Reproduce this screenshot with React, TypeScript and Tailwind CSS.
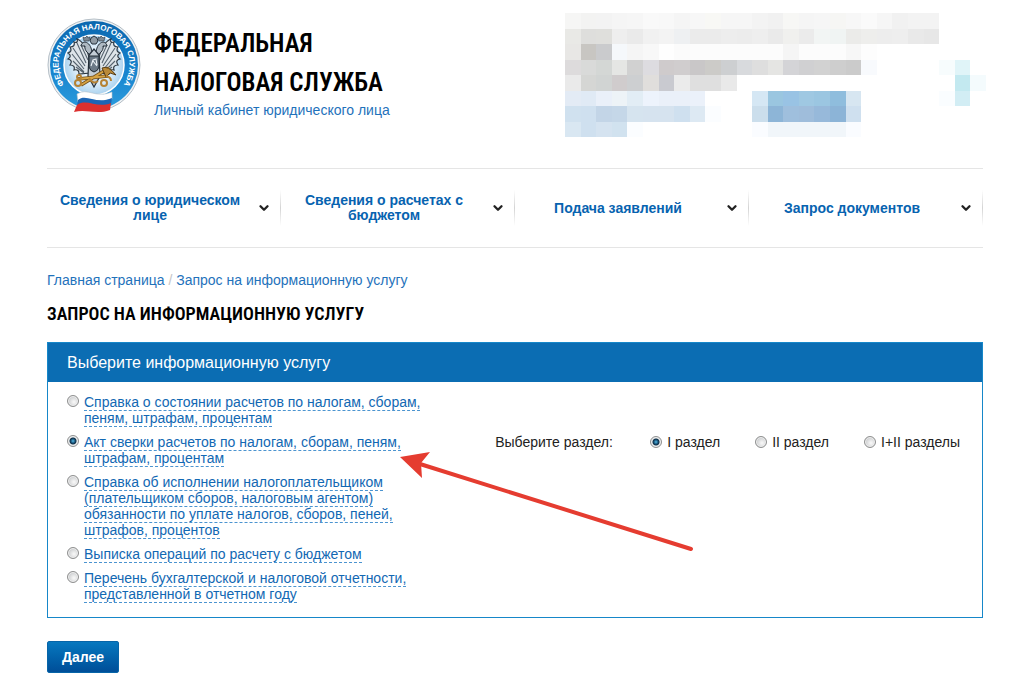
import { ChevronDown } from "lucide-react";

const NAV = ["Сведения о юридическом лице", "Сведения о расчетах с бюджетом", "Подача заявлений", "Запрос документов"];

const SERVICES = [
  "Справка о состоянии расчетов по налогам, сборам, пеням, штрафам, процентам",
  "Акт сверки расчетов по налогам, сборам, пеням, штрафам, процентам",
  "Справка об исполнении налогоплательщиком (плательщиком сборов, налоговым агентом) обязанности по уплате налогов, сборов, пеней, штрафов, процентов",
  "Выписка операций по расчету с бюджетом",
  "Перечень бухгалтерской и налоговой отчетности, представленной в отчетном году",
];

const SECTIONS = ["I раздел", "II раздел", "I+II разделы"];

// each run: row, first column, cell colours
const MOSAIC: [number, number, string][] = [
  [0, 0, "f6f6f5 f3f3f2 f3f3f3 f5f5f5 f6f6f6 f9f9f9 f8f8f8 f5f5f5 f7f7f7 f8f8f5 f6f6f6 f6f6f6 f3f3f3 f1f1f1 f7f7f5 f5f5f5 f6f6f6 f6f6f4 f7f7f7 fafafa f6f6f6 f1f1f1 f3f3f3 f3f3f3"],
  [1, 0, "e9e9e6 dededc dfdfdc eeeeee eaeaea f1f1f1 f3f3f3 eef0f2 ebebeb ebebeb ededed ececec eeeeee eaeaea f0f0ee ebebeb f2f5f4 f0f4f3 ebebe9 eeeeec ededed eeeeee e9e9e9 e7e7e7"],
  [2, 0, "e8e7e5 c8c6c2 cacbcd f5f8fb f5f5f5 f8f8f8 fefefe fbfbfb fcfcfc fcfcfc fcfcfc fcfcfc fcfcfc fcfcfc f5f5f5 fcfcfc fcfcfc fcfcfc f7f7f7 fdfdfd"],
  [3, 0, "dddbdc d9dad9 d4d7d5 e5e6e4 d1d1d1 dddce0 cfcbcc d0cdce c9c7c8 cccbc8 cdcfd1 d8dadd dedede e5e5e3 d4d4d7 d0d0d2 d2d2d2 cecece cbcbcb f8fafd"],
  [3, 24, "f7fcfd e0f4f8"],
  [4, 0, "eaeaea d5d6d4 d1d4d3 d0cccd cdcfd1 e0dedc c9cad0 ebebeb dfdfdf dfdfdf e9e9e9"],
  [4, 25, "c3e9f0 f4fbfd"],
  [5, 0, "e3ebf5 e0eaf5 eaf0f9 edf3f7 e2edf5 edf3fc eaf0f9 eaf0f9 ebf1fa"],
  [5, 12, "d5e7f4 9ac6e0 99c3e4 9fc8e2 9bc6e1 8fbddd d7e6f1"],
  [5, 24, "fafdff d2edf4"],
  [6, 0, "d0e1ef cfe0ef c3d5e7 c5d7e8 d6e4ef d6e3ef d6e3ef cfe0ef dde9f3 fbfdff"],
  [6, 12, "cbdeec 8db5d7 9fbfdd 9fbddb 97b9da 8cb4d7 cfe0ef"],
  [7, 0, "d9e7f2 cfe0ef d5e3f0 d1e2ef fbfdff"],
  [7, 12, "fafcff f1f6fa f1f6fa f1f6fa f1f6fa f1f6fa fafcff"],
];

function Mosaic() {
  return (
    <svg viewBox="0 0 27 8" className="mt-[13px] -mr-[3px] h-[124px] w-[421px] shrink-0" preserveAspectRatio="none" shapeRendering="crispEdges" aria-hidden="true">
      {MOSAIC.flatMap(([row, start, colors]) =>
        colors.split(" ").map((c, i) => <rect key={`${row}-${start + i}`} x={start + i} y={row} width="1" height="1" fill={`#${c}`} />)
      )}
    </svg>
  );
}

function Wing() {
  return (
    <>
      <path d="M43 43 C41 34 38 24 30 21 C31 24 30 25 27 24 C28 27 27 29 23 29 C25 32 24 34 21 35 C24 37 24 39 21 41 C25 42 25 44 23 47 C27 47 28 49 27 52 C31 51 32 53 32 56 L43 55 Z" fill="#dde4e9" stroke="#2c3741" strokeWidth="1.2" />
      <path d="M30 25 L39 45 M26 30 L38 48 M25 36 L37 51 M26 43 L37 54 M29 49 L37 55 M34 27 L41 42" stroke="#56636f" strokeWidth="1.1" fill="none" />
      <path d="M45 34 C44 28 42 25 38 24 C35 24 34 27 34 28 L38 28 C37 33 42 36 45 38 Z" fill="#aeb9c2" stroke="#26313c" strokeWidth="1" />
      <path d="M37 23 l-1 -4 l2 1 l2 -2 l1 2 l2 -1 l-1 4z" fill="#808b94" stroke="#39444d" strokeWidth="0.7" />
    </>
  );
}

function Emblem() {
  return (
    <svg viewBox="0 0 94 96" className="h-24 w-[94px] shrink-0" role="img" aria-label="Эмблема ФНС">
      <defs>
        <linearGradient id="ring" x1="0" y1="0" x2="0" y2="1">
          <stop offset="0" stopColor="#0b67ae" />
          <stop offset="0.5" stopColor="#1580cb" />
          <stop offset="1" stopColor="#2b9bdd" />
        </linearGradient>
        <radialGradient id="disc">
          <stop offset="0" stopColor="#f8fcff" />
          <stop offset="0.6" stopColor="#e0effa" />
          <stop offset="1" stopColor="#a9d2ef" />
        </radialGradient>
        <path id="arc" d="M20.1 70 A35.5 35.5 0 1 1 73.9 70" />
      </defs>
      <circle cx="47" cy="47" r="46" fill="#eef1f3" stroke="#b5bfc7" strokeWidth="1" />
      <circle cx="47" cy="47" r="44" fill="url(#ring)" />
      <circle cx="47" cy="47" r="30" fill="url(#disc)" stroke="#fff" strokeWidth="1.5" />
      <text fill="#fff" className="font-['Liberation_Sans',Arial,sans-serif] text-[8px] font-bold">
        <textPath href="#arc" startOffset="50%" textAnchor="middle">ФЕДЕРАЛЬНАЯ НАЛОГОВАЯ СЛУЖБА</textPath>
      </text>
      <Wing />
      <g transform="translate(94 0) scale(-1 1)"><Wing /></g>
      <path d="M43 23 l1 -3 l3 -2 l3 2 l1 3 l-2 3 h-4z" fill="#909ba4" stroke="#26313c" strokeWidth="1" />
      <path d="M42 37 L47 31 L52 37 L53 58 L47 69 L41 58Z" fill="#c4ced6" stroke="#26313c" strokeWidth="1.2" />
      <path d="M42 38 h10 v11 q-1 4 -5 5 q-4 -1 -5 -5z" fill="#6b7986" stroke="#1f2a33" strokeWidth="1" />
      <path d="M44 48 l2 -6 l3 -1 l1 6 M46 43 l4 5" stroke="#edf3f7" strokeWidth="1.1" fill="none" />
      <path d="M31 61 L61 58 M34 67 L62 50" stroke="#704f1c" strokeWidth="3.5" />
      <path d="M31 61 L61 58 M34 67 L62 50" stroke="#d6a343" strokeWidth="2" />
      <path d="M55 50 Q61 47 69 57 L63 55 L59 59Z" fill="#b98938" stroke="#4d3512" strokeWidth="0.9" />
      <g fill="none" stroke="#b58233" strokeWidth="2">
        <circle cx="31" cy="65" r="3" />
        <circle cx="32" cy="59" r="2" />
        <circle cx="57" cy="65" r="3" />
        <path d="M42 60 q4 7 9 3 M59 58 q5 1 5 5" />
      </g>
      <path d="M30 76 C41 69 48 81 65 74 L65 81 C49 87 38 76 31 84Z" fill="#fff" stroke="#b8c2cb" strokeWidth="0.6" />
      <path d="M31 82 C39 75 49 87 65 80 L64 86 C51 91 40 82 30 88Z" fill="#1c65b5" />
      <path d="M30 87 C40 80 50 91 64 85 L63 92 C50 97 40 91 27 94Z" fill="#dc302f" />
    </svg>
  );
}

function Radio({ name, checked, id }: { name: string; checked: boolean; id: string }) {
  return (
    <input
      type="radio"
      id={id}
      name={name}
      defaultChecked={checked}
      className="m-0 size-3 shrink-0 appearance-none rounded-full border border-[#8e8f8f] bg-[radial-gradient(circle_at_60%_60%,#f4f4f4_10%,#c7c9cb_75%)] shadow-[inset_0_0_0_1px_#f0f0f0] checked:bg-[radial-gradient(circle,#57bce6_0,#17547c_2px,#102f46_3px,#dfe3e6_4px)]"
    />
  );
}

export default function App() {
  return (
    <div className="min-h-screen bg-white pr-[41px] pb-7 pl-[47px] font-['Liberation_Sans',Arial,sans-serif] text-sm text-[#222]">
      <header className="flex h-[168px] items-start justify-between">
        <div className="flex items-start pt-[18px]">
          <Emblem />
          <div className="pt-[6px] pl-[13px]">
            <h1 className="font-['Roboto_Condensed','Liberation_Sans_Narrow',sans-serif] text-[25px] leading-[39px] font-semibold text-black">
              ФЕДЕРАЛЬНАЯ
              <br />
              НАЛОГОВАЯ СЛУЖБА
            </h1>
            <a href="#" className="block leading-4 text-[#1f72bb]">Личный кабинет юридического лица</a>
          </div>
        </div>
        <Mosaic />
      </header>

      <nav className="grid h-20 grid-cols-4 border-y border-[#e5e5e5]">
        {NAV.map((label) => (
          <div key={label} className="flex items-center">
            <a href="#" className="flex flex-1 items-center pr-[9px] font-bold text-[#0763b0]">
              <span className="flex-1 pr-3 pl-2 text-center leading-[15px]">{label}</span>
              <ChevronDown className="size-[14px] shrink-0 text-[#222]" strokeWidth={4} />
            </a>
            <span className="h-9 w-px bg-linear-to-b from-white via-[#d4d4d4] to-white" />
          </div>
        ))}
      </nav>

      <main>
        <div className="pt-6 leading-4 text-[#1f72bb]">
          <a href="#">Главная страница</a>
          <span className="text-[#c5c5c5]"> / </span>
          <a href="#">Запрос на информационную услугу</a>
        </div>
        <h2 className="mt-3 font-['Roboto_Condensed','Liberation_Sans_Narrow',sans-serif] text-lg leading-7 font-semibold text-black">
          ЗАПРОС НА ИНФОРМАЦИОННУЮ УСЛУГУ
        </h2>

        <section className="relative mt-[14px] border border-[#1687c9] pb-[15px]">
          <h3 className="bg-[#0b6db3] pl-[19px] text-base leading-[39px] text-white">Выберите информационную услугу</h3>
          <div className="mt-3 flex flex-col gap-2 pl-[19px]">
            {SERVICES.map((label, i) => (
              <div key={label} className="flex items-start">
                <div className="flex w-[364px] shrink-0 items-start gap-[5px] pt-px">
                  <Radio name="service" id={`service-${i}`} checked={i === 1} />
                  <label htmlFor={`service-${i}`} className="-mt-px leading-4 text-[#1268b3]">
                    <span className="border-b border-dashed border-[#4b94d0]">{label}</span>
                  </label>
                </div>
                {i === 1 && (
                  <fieldset className="ml-auto flex h-4 items-center pr-[22px]">
                    <legend className="float-left w-[155px] leading-4">Выберите раздел:</legend>
                    <div className="flex gap-[35px]">
                      {SECTIONS.map((s, n) => (
                        <div key={s} className="flex items-center gap-[5px]">
                          <Radio name="section" id={`section-${n}`} checked={n === 0} />
                          <label htmlFor={`section-${n}`} className="leading-4">{s}</label>
                        </div>
                      ))}
                    </div>
                  </fieldset>
                )}
              </div>
            ))}
          </div>
          <svg viewBox="0 0 296 102" className="pointer-events-none absolute top-[108px] left-[352px] h-[102px] w-[296px]" aria-hidden="true">
            <path d="M20 13 L291 98" stroke="#e53c30" strokeWidth="4" strokeLinecap="round" />
            <path d="M0 6 L30 1 L21 12 L22 27Z" fill="#e53c30" />
          </svg>
        </section>

        <button
          type="button"
          className="mt-[23px] h-8 rounded-xs border border-[#0765a8] bg-linear-to-b from-[#0878bf] to-[#004e98] px-[14px] font-bold text-white"
        >
          Далее
        </button>
      </main>
    </div>
  );
}
